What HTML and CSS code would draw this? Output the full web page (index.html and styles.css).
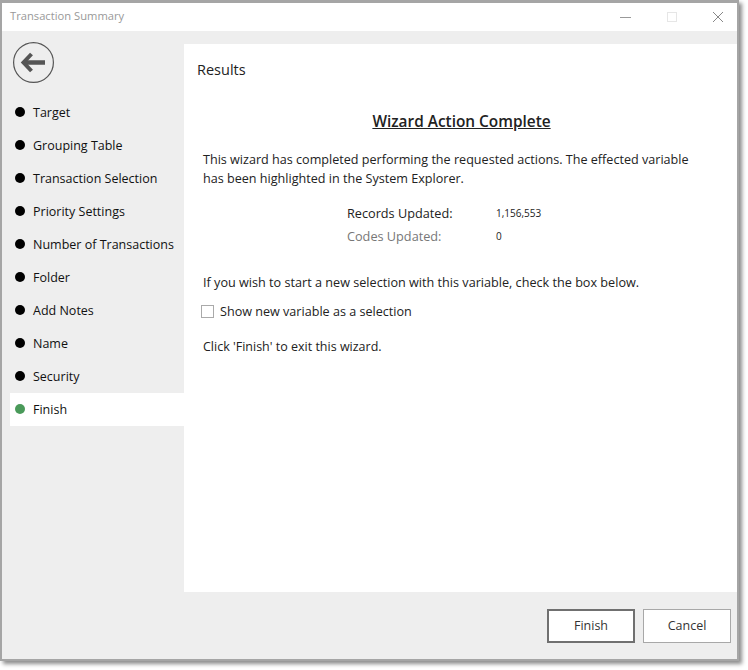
FILE: index.html
```html
<!DOCTYPE html>
<html lang="en">
<head>
    <meta charset="UTF-8">
    <title>Transaction Summary</title>
    <link rel="stylesheet" href="styles.css">
</head>
<body>
    <div class="window">
        <!-- Title bar -->
        <div class="title-bar">
            <span class="title">Transaction Summary</span>
            <div class="window-controls">
                <svg width="12" height="12" viewBox="0 0 12 12"><path d="M0 6.5H11" stroke="#999" fill="none"/></svg>
                <svg width="12" height="12" viewBox="0 0 12 12"><rect x="1.5" y="1.5" width="9" height="9" stroke="#e6e6e6" fill="none"/></svg>
                <svg width="12" height="12" viewBox="0 0 12 12"><path d="M1 1L11 11M11 1L1 11" stroke="#888" fill="none"/></svg>
            </div>
        </div>

        <div class="main">
            <!-- Left steps -->
            <div class="sidebar">
                <div class="back-row">
                    <svg class="back-icon" width="41" height="41" viewBox="0 0 41 41">
                        <circle cx="20.5" cy="20.5" r="19.9" stroke="#555" stroke-width="1.2" fill="none"/>
                        <path d="M18.5 12L10.5 20.5L18.5 29" stroke="#555" stroke-width="4" fill="none"/>
                        <path d="M12 20.5H32" stroke="#555" stroke-width="4.5" fill="none"/>
                    </svg>
                </div>
                <ul class="steps">
                    <li class="step"><span class="dot"></span>Target</li>
                    <li class="step"><span class="dot"></span>Grouping Table</li>
                    <li class="step"><span class="dot"></span>Transaction Selection</li>
                    <li class="step"><span class="dot"></span>Priority Settings</li>
                    <li class="step"><span class="dot"></span>Number of Transactions</li>
                    <li class="step"><span class="dot"></span>Folder</li>
                    <li class="step"><span class="dot"></span>Add Notes</li>
                    <li class="step"><span class="dot"></span>Name</li>
                    <li class="step"><span class="dot"></span>Security</li>
                    <li class="step active"><span class="dot"></span>Finish</li>
                </ul>
            </div>

            <!-- Results panel -->
            <div class="content">
                <div class="content-title">Results</div>
                <h2 class="heading">Wizard Action Complete</h2>
                <p class="summary">This wizard has completed performing the requested actions. The effected variable has been highlighted in the System Explorer.</p>
                <div class="stats">
                    <div class="stat"><span class="stat-label">Records Updated:</span><span class="stat-value">1,156,553</span></div>
                    <div class="stat muted"><span class="stat-label">Codes Updated:</span><span class="stat-value">0</span></div>
                </div>
                <p class="hint">If you wish to start a new selection with this variable, check the box below.</p>
                <label class="check-row"><span class="checkbox"></span>Show new variable as a selection</label>
                <p class="exit-note">Click 'Finish' to exit this wizard.</p>
            </div>
        </div>

        <!-- Footer -->
        <div class="footer">
            <button class="btn btn-default">Finish</button>
            <button class="btn">Cancel</button>
        </div>
    </div>
</body>
</html>
```

FILE: styles.css
```css
html, body {
    height: 670px;
}

body {
    margin: 0;
    background-color: #ffffff;
    font-family: "Open Sans", "Noto Sans", sans-serif;
    font-size: 12.5px;
    color: #222;
    overflow: hidden;
}

.window {
    box-sizing: border-box;
    width: 739px;
    height: 661px;
    display: flex;
    flex-direction: column;
    background: #eeeeee;
    border: 2px solid #a5a5a5;
    border-top-width: 3px;
    box-shadow: 3px 3px 4px rgba(0, 0, 0, 0.45);
}

.title-bar {
    height: 28px;
    flex: none;
    display: flex;
    align-items: center;
    justify-content: space-between;
    background: #ffffff;
    padding: 0 13px 3px 8px;
    box-sizing: border-box;
}

.title {
    color: #999;
    font-size: 11.2px;
}

.window-controls {
    display: flex;
    gap: 34px;
    margin-top: 3px;
}

.main {
    flex: 1;
    display: flex;
    min-height: 0;
}

.sidebar {
    width: 174px;
    flex: none;
    padding-left: 8px;
}

.back-row {
    height: 64.5px;
    padding: 11px 0 0 3px;
    box-sizing: border-box;
}

.back-icon {
    display: block;
}

.steps {
    list-style: none;
    margin: 0;
    padding: 0;
}

.step {
    height: 33px;
    display: flex;
    align-items: center;
    gap: 8px;
    padding-left: 5px;
    color: #111;
}

.step.active {
    background: #ffffff;
}

.dot {
    width: 10px;
    height: 10px;
    border-radius: 50%;
    background: #000000;
}

.step.active .dot {
    background: #4a9a5a;
}

.content {
    flex: 1;
    margin-top: 13px;
    background: #ffffff;
    padding: 16px 19px 0 19px;
    font-size: 12.6px;
}

.content-title {
    font-size: 14.5px;
    margin-left: -6px;
    line-height: 20px;
}

.heading {
    margin: 31px 0 0;
    padding-left: 2px;
    font-size: 15.4px;
    font-weight: 600;
    line-height: 22px;
    text-align: center;
    text-decoration: underline;
}

.summary {
    margin: 17px 0 0;
    line-height: 19px;
    width: 495px;
}

.stats {
    margin: 13px 0 0 144px;
}

.stat {
    display: flex;
    height: 23px;
    align-items: center;
}

.stat-label {
    width: 149px;
    font-size: 12.7px;
}

.stat-value {
    font-size: 10px;
    font-weight: 500;
}

.stat.muted .stat-label {
    color: #777;
}

.hint {
    margin: 26px 0 0;
    line-height: 19px;
    font-size: 12.65px;
}

.check-row {
    display: flex;
    align-items: center;
    gap: 6px;
    margin: 10px 0 0 -2px;
    line-height: 19px;
}

.checkbox {
    width: 11px;
    height: 11px;
    border: 1px solid #aaa;
    background: #fff;
}

.exit-note {
    margin: 16px 0 0;
    line-height: 19px;
    font-size: 12.5px;
}

.footer {
    height: 67px;
    flex: none;
    display: flex;
    justify-content: flex-end;
    align-items: flex-start;
    gap: 8px;
    padding: 17px 6px 0 0;
    box-sizing: border-box;
}

.btn {
    width: 88px;
    height: 34px;
    background: #ffffff;
    border: 1px solid #a8a8a8;
    font-family: inherit;
    font-size: 12.5px;
    color: #333;
    padding: 0 0 2px;
}

.btn-default {
    border: 2px solid #707070;
}
```
